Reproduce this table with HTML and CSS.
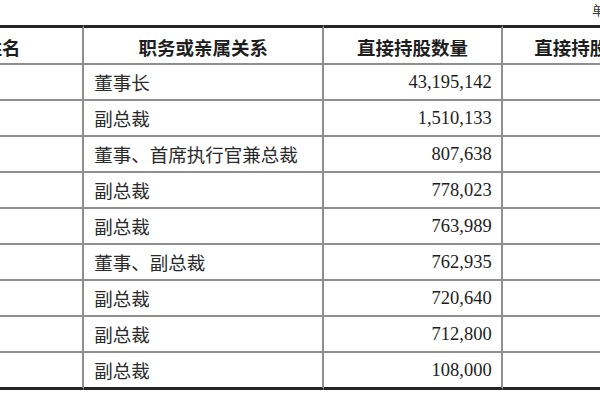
FILE: index.html
```html
<!DOCTYPE html>
<html lang="zh-CN">
<head>
<meta charset="utf-8">
<title>直接持股情况</title>
<link rel="stylesheet" href="styles.css">
</head>
<body>
<div class="page">
  <div class="unit">单位：股</div>
  <table class="holdings">
    <thead>
      <tr>
        <th class="c-name">姓名</th>
        <th class="c-role">职务或亲属关系</th>
        <th class="c-num">直接持股数量</th>
        <th class="c-pct">直接持股比例</th>
      </tr>
    </thead>
    <tbody>
      <tr><td></td><td class="role">董事长</td><td class="num">43,195,142</td><td></td></tr>
      <tr><td></td><td class="role">副总裁</td><td class="num">1,510,133</td><td></td></tr>
      <tr><td></td><td class="role">董事、首席执行官兼总裁</td><td class="num">807,638</td><td></td></tr>
      <tr><td></td><td class="role">副总裁</td><td class="num">778,023</td><td></td></tr>
      <tr><td></td><td class="role">副总裁</td><td class="num">763,989</td><td></td></tr>
      <tr><td></td><td class="role">董事、副总裁</td><td class="num">762,935</td><td></td></tr>
      <tr><td></td><td class="role">副总裁</td><td class="num">720,640</td><td></td></tr>
      <tr><td></td><td class="role">副总裁</td><td class="num">712,800</td><td></td></tr>
      <tr><td></td><td class="role">副总裁</td><td class="num">108,000</td><td></td></tr>
    </tbody>
  </table>
</div>
</body>
</html>
```

FILE: styles.css
```css
html, body {
  margin: 0;
  padding: 0;
  background: #ffffff;
}

body {
  width: 600px;
  height: 400px;
  overflow: hidden;
  font-family: "Liberation Serif", "Noto Sans CJK SC", serif;
  color: #222222;
}

.page {
  width: 600px;
  height: 400px;
  overflow: hidden;
}

.unit {
  height: 25px;
  box-sizing: border-box;
  padding-left: 592px;
  padding-top: 3px;
  font-size: 13px;
  line-height: 14px;
  white-space: nowrap;
  color: #333333;
  font-family: "Noto Sans CJK SC", sans-serif;
}

.holdings {
  margin-left: -78px;
  border-collapse: separate;
  border-spacing: 0;
  table-layout: fixed;
  width: 755px;
  font-size: 18.5px;
}

.holdings th,
.holdings td {
  padding: 0;
  border-bottom: 2px solid #8f8f8f;
  border-right: 2px solid #8f8f8f;
  white-space: nowrap;
  overflow: hidden;
  vertical-align: middle;
}

.holdings th:last-child,
.holdings td:last-child {
  border-right: none;
}

.holdings th {
  height: 35px;
  border-top: 3px solid #262626;
  font-family: "Noto Sans CJK SC", sans-serif;
  font-weight: 700;
  color: #1e1e1e;
  text-align: center;
  line-height: 20px;
  padding-top: 2px;
  box-sizing: border-box;
  height: 40px;
}

.holdings td {
  height: 34px;
  line-height: 20px;
}

.holdings tbody tr:last-child td {
  border-bottom: 3px solid #262626;
}

.c-name { width: 160px; }
.c-role { width: 237px; }
.c-num  { width: 176px; }
.c-pct  { width: 172px; }

.role {
  font-family: "Noto Sans CJK SC", sans-serif;
  color: #2a2a2a;
  padding-left: 10px !important;
  text-align: left;
}

.num {
  text-align: right;
  padding-right: 9px !important;
  color: #1c1c1c;
}
```
